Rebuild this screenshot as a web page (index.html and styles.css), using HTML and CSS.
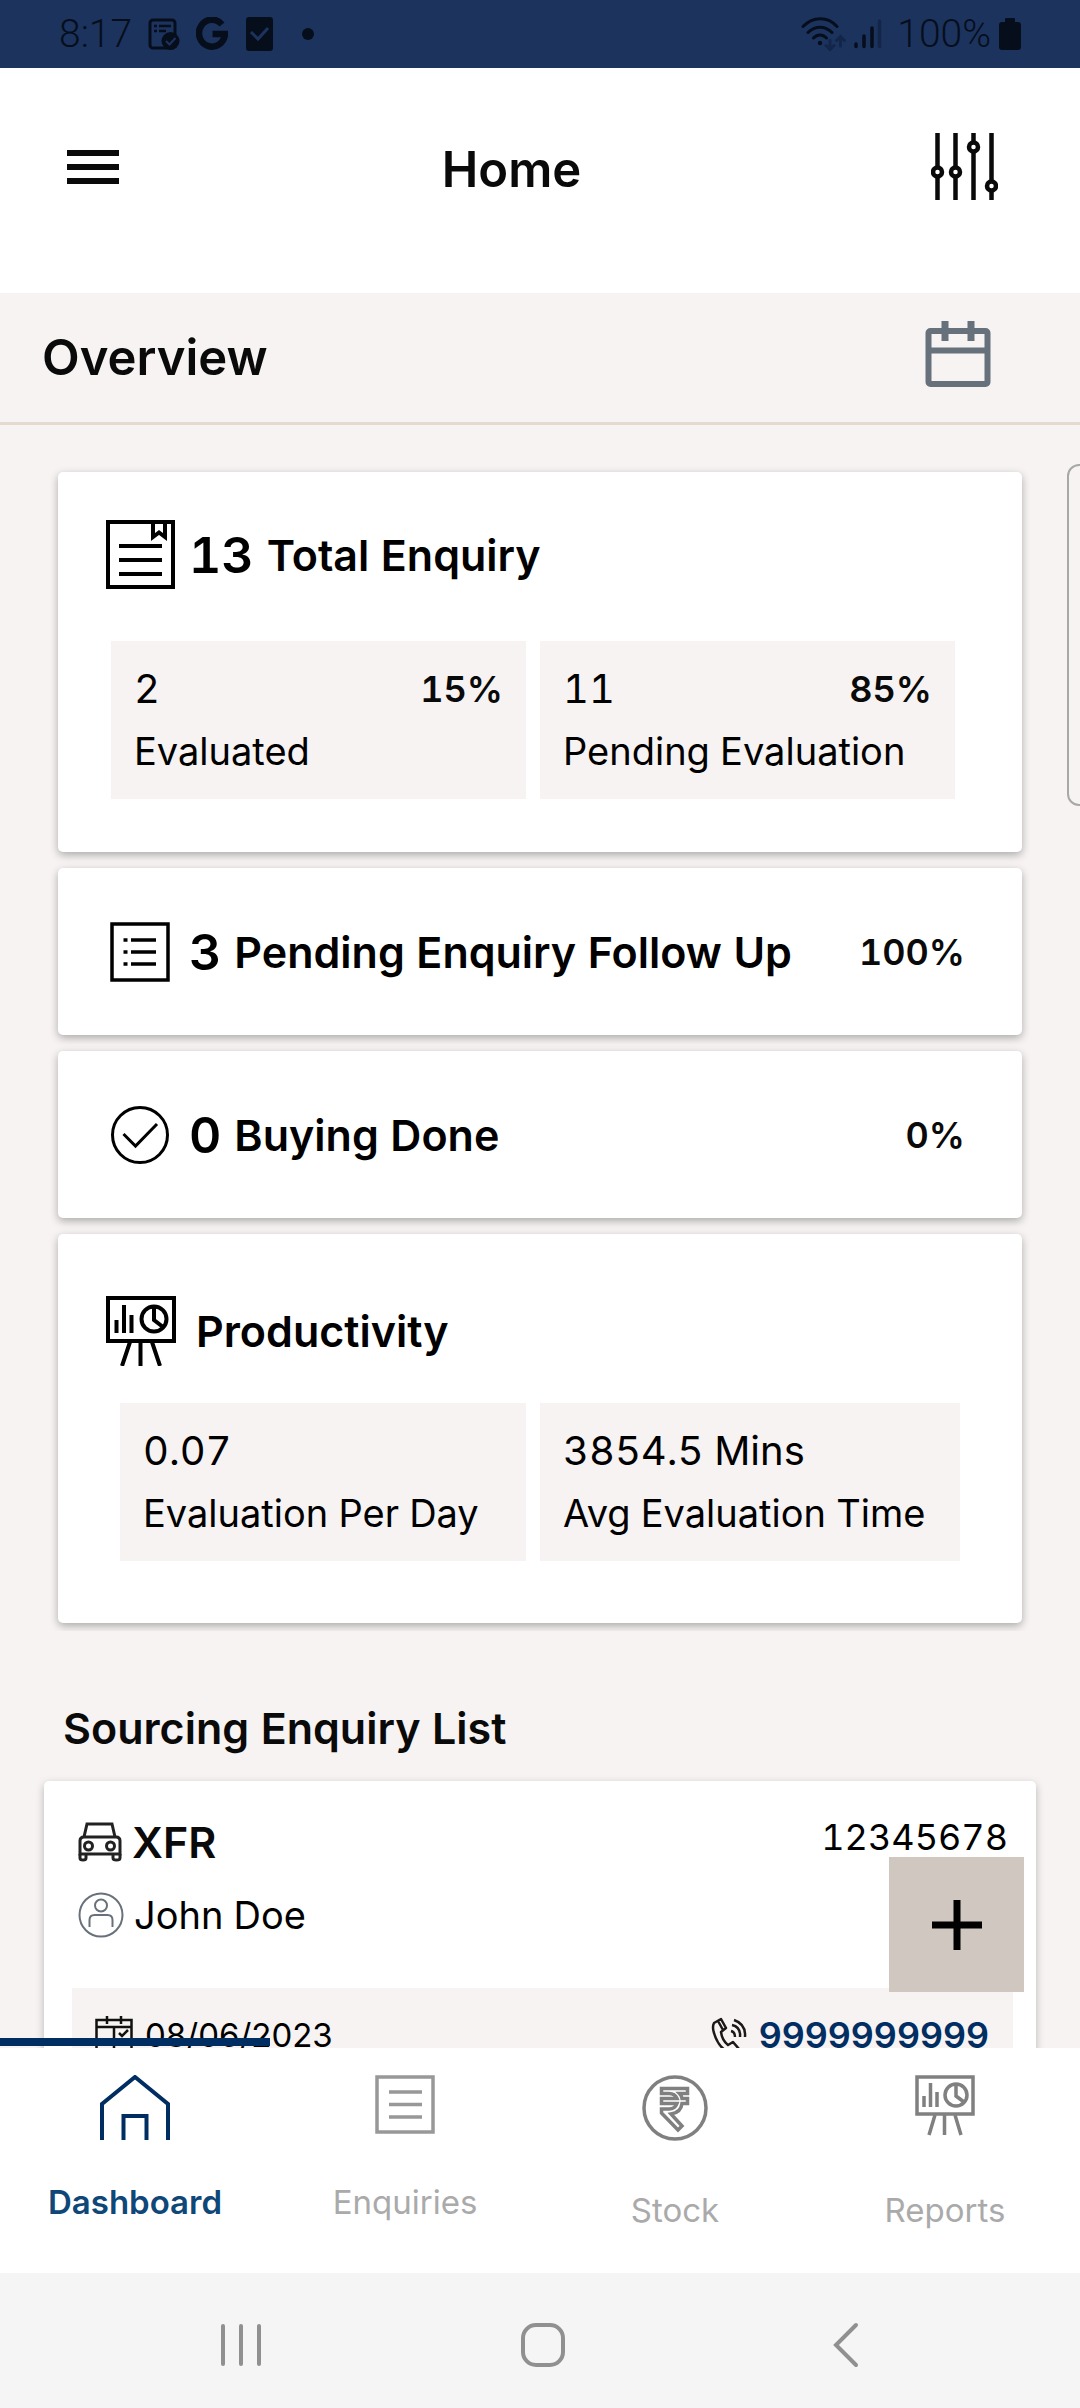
FILE: index.html
```html
<!DOCTYPE html>
<html lang="en">
<head>
    <meta charset="UTF-8">
    <meta name="viewport" content="width=device-width, initial-scale=1.0">
    <title>Home</title>
    <link rel="stylesheet" href="styles.css">
</head>
<body>
    <div class="status-bar">
        <div class="status-left">
            <span class="status-text">8:17</span>
            <svg width="32" height="32" viewBox="0 0 32 32" fill="none" stroke="#060e1c" stroke-width="3">
                <rect x="2" y="2" width="25" height="28" rx="3"/>
                <path d="M6 8h3M11 8h12M6 13h3M11 13h7" stroke-width="2.500"/>
                <circle cx="22.500" cy="23" r="9" fill="#060e1c" stroke="none"/>
                <path d="M18 23l3.500 3.500 6-6.500" stroke="#1c335e" stroke-width="2"/>
            </svg>
            <svg width="32" height="34" viewBox="0 0 32 34" fill="none" stroke="#060e1c" stroke-width="6.500">
                <path d="M26 7.500A13 13.500 0 1 0 29 17H16.500"/>
            </svg>
            <svg class="status-check" width="27" height="34" viewBox="0 0 27 34">
                <rect width="27" height="34" rx="3" fill="#060e1c"/>
                <path d="M5 15l7 7L22 11" fill="none" stroke="#1c335e" stroke-width="3"/>
            </svg>
            <span class="status-dot"></span>
        </div>
        <div class="status-right">
            <svg width="45" height="34" viewBox="0 0 45 34" fill="none" stroke="#060e1c" stroke-width="3" stroke-linecap="round">
                <path d="M2 9.500c10-10.500 25-10.500 34 0M7 15.500c7-7 17-7 24 0M12.500 21c4-4 9-4 13 0"/>
                <circle cx="19" cy="26" r="2.200" fill="#060e1c" stroke="none"/>
                <path d="M29 23v9M25 28.500l4 4 4-4M39.500 29v-9M35.500 23.500l4-4 4 4" stroke="#13264a"/>
            </svg>
            <svg class="status-signal" width="28" height="32" viewBox="0 0 28 32" stroke="#060e1c" stroke-width="3.500" stroke-linecap="round">
                <path d="M2 26v2.500M10 18v10.500M18 10v18.500"/>
                <path d="M25.500 3v25.500" stroke="#13264a"/>
            </svg>
            <span class="status-text">100%</span>
            <svg class="status-battery" width="22" height="32" viewBox="0 0 22 32" fill="#060e1c">
                <rect x="6" y="0" width="10" height="6" rx="1"/>
                <rect x="0" y="4" width="22" height="28" rx="3"/>
            </svg>
        </div>
    </div>

    <header class="header">
        <button class="icon-button" aria-label="Menu">
            <svg width="52" height="34" viewBox="0 0 52 34" fill="#0a0a0a">
                <path d="M0 0h52v6H0zM0 14h52v6H0zM0 28h52v6H0z"/>
            </svg>
        </button>
        <h1 class="header-title">Home</h1>
        <button class="icon-button filter-button" aria-label="Filter">
            <svg width="67" height="67" viewBox="0 0 67 67" fill="none" stroke="#0a0a0a" stroke-width="4.500">
                <path d="M6.500 0v35M6.500 44v23M24.500 0v35M24.500 44v23M42.500 0v10M42.500 18v49M60.500 0v48M60.500 57v10"/>
                <circle cx="6.500" cy="39" r="4.500"/>
                <circle cx="24.500" cy="39" r="4.500"/>
                <circle cx="42.500" cy="14" r="4.500"/>
                <circle cx="60.500" cy="53" r="4.500"/>
            </svg>
        </button>
    </header>

    <div class="overview">
        <h2 class="overview-title">Overview</h2>
        <button class="icon-button" aria-label="Select dates">
            <svg width="66" height="68" viewBox="0 0 66 68" fill="none" stroke="#67717b" stroke-width="6">
                <rect x="3.500" y="11" width="59" height="53" rx="2"/>
                <path d="M3 30.500h60"/>
                <path d="M20 1v20M46 1v20" stroke-width="7"/>
            </svg>
        </button>
    </div>

    <main class="content">
        <div class="side-handle"></div>

        <section class="cards">
            <div class="card card-total">
                <div class="card-head">
                    <svg class="card-icon" width="69" height="69" viewBox="0 0 69 69" fill="none" stroke="#000" stroke-width="4">
                        <rect x="2" y="2" width="65" height="65"/>
                        <path d="M47 2v15l6-4.500 6 4.500V2M13 26h43M13 40h43M13 54h43"/>
                    </svg>
                    <span class="card-count">13</span>
                    <span class="card-title">Total Enquiry</span>
                </div>
                <div class="tiles">
                    <div class="tile">
                        <div class="tile-row">
                            <span class="tile-value">2</span>
                            <span class="percent">15%</span>
                        </div>
                        <div class="tile-label">Evaluated</div>
                    </div>
                    <div class="tile">
                        <div class="tile-row">
                            <span class="tile-value">11</span>
                            <span class="percent">85%</span>
                        </div>
                        <div class="tile-label">Pending Evaluation</div>
                    </div>
                </div>
            </div>

            <div class="card card-row">
                <svg class="card-icon" width="69" height="60" viewBox="0 0 69 60" fill="none" stroke="#000" stroke-width="3.500">
                    <rect x="6" y="2" width="56" height="56"/>
                    <path d="M17.500 18h4M25 18h25M17.500 30h4M25 30h25M17.500 42h4M25 42h25"/>
                </svg>
                <span class="card-count">3</span>
                <span class="card-title">Pending Enquiry Follow Up</span>
                <span class="percent">100%</span>
            </div>

            <div class="card card-row">
                <svg class="card-icon" width="69" height="60" viewBox="0 0 69 60" fill="none" stroke="#000" stroke-width="3">
                    <circle cx="34" cy="30" r="27.500"/>
                    <path d="M17.500 29l12 12L51 19"/>
                </svg>
                <span class="card-count">0</span>
                <span class="card-title">Buying Done</span>
                <span class="percent">0%</span>
            </div>

            <div class="card card-productivity">
                <div class="card-head">
                    <svg class="card-icon" width="70" height="70" viewBox="0 0 70 70" fill="none" stroke="#000" stroke-width="4">
                        <rect x="2" y="2" width="66" height="43"/>
                        <path d="M10.500 37V24M18 37V9M25.500 37V19M24 46l-8 24M34.500 46v24M46 46l8 24"/>
                        <circle cx="48" cy="23" r="12.500"/>
                        <path d="M48 10v14l9 7"/>
                    </svg>
                    <span class="card-title">Productivity</span>
                </div>
                <div class="tiles">
                    <div class="tile">
                        <div class="tile-value">0.07</div>
                        <div class="tile-label">Evaluation Per Day</div>
                    </div>
                    <div class="tile">
                        <div class="tile-value">3854.5 Mins</div>
                        <div class="tile-label">Avg Evaluation Time</div>
                    </div>
                </div>
            </div>
        </section>

        <h2 class="list-title">Sourcing Enquiry List</h2>

        <article class="enquiry">
            <div class="enquiry-top">
                <svg class="enquiry-icon" width="44" height="40" viewBox="0 0 44 40" fill="none" stroke="#222" stroke-width="3">
                    <path d="M6 15L9 2h25l3 13"/>
                    <path d="M2 32V19q0-4 4-4h32q4 0 4 4v13z"/>
                    <circle cx="10.500" cy="24" r="4"/>
                    <circle cx="32.500" cy="24" r="4"/>
                    <path d="M2 32v4q0 2 3 2t3-2v-4M35 32v4q0 2 3.500 2t3.500-2v-4"/>
                </svg>
                <span class="enquiry-name">XFR</span>
                <span class="enquiry-id">12345678</span>
            </div>
            <div class="enquiry-person">
                <svg class="enquiry-icon" width="46" height="46" viewBox="0 0 46 46" fill="none" stroke="#67717b" stroke-width="2">
                    <circle cx="23" cy="23" r="21.500"/>
                    <circle cx="23" cy="13.500" r="6"/>
                    <path d="M11.500 35v-7q0-5 5-5h13q5 0 5 5v7"/>
                </svg>
                <span class="person-name">John Doe</span>
            </div>
            <div class="enquiry-meta">
                <div class="meta-item">
                    <svg width="38" height="38" viewBox="0 0 38 38" fill="none" stroke="#111" stroke-width="2.500">
                        <rect x="1.500" y="4" width="35" height="33"/>
                        <path d="M1 11h36M12 0v8M26 0v8M19 11v26M1 24h18M24 17l3 3 6-6"/>
                    </svg>
                    <span class="meta-date">08/06/2023</span>
                </div>
                <div class="meta-item">
                    <svg width="36" height="38" viewBox="0 0 36 38" fill="none" stroke="#1d1816" stroke-width="2.500" stroke-linejoin="round">
                        <path d="M3 7l7-4 5 9-5 4q1 8 7 13l5-3 6 7-6 5Q8 34 3 17 1 11 3 7zM7 5l5 9"/>
                        <path d="M20 15q4 1 4 6M21 9q9 2 8 12M23 4q12 4 11 17"/>
                    </svg>
                    <a class="meta-phone" href="tel:9999999999">9999999999</a>
                </div>
            </div>
        </article>

        <button class="add-button" aria-label="Add enquiry">
            <svg width="50" height="50" viewBox="0 0 50 50" stroke="#000" stroke-width="7">
                <path d="M25 0v50M0 25h50"/>
            </svg>
        </button>
    </main>

    <nav class="tabs">
        <a class="tab tab-active" href="#dashboard">
            <svg class="tab-icon" width="70" height="66" viewBox="0 0 70 66" fill="none" stroke="#002d62" stroke-width="4">
                <path d="M2 65V29L35 2l33 27v36M23.500 65V41h23v24"/>
            </svg>
            <span class="tab-label">Dashboard</span>
        </a>
        <a class="tab" href="#enquiries">
            <svg class="tab-icon" width="60" height="66" viewBox="0 0 60 66" fill="none" stroke="#989898" stroke-width="3.500">
                <rect x="2" y="2" width="56" height="55"/>
                <path d="M14 17h33M14 29.500h33M14 42h33"/>
            </svg>
            <span class="tab-label">Enquiries</span>
        </a>
        <a class="tab tab-low" href="#stock">
            <svg class="tab-icon" width="66" height="66" viewBox="0 0 66 66" fill="none" stroke="#808080" stroke-width="3.500">
                <circle cx="33" cy="33" r="31"/>
                <path d="M19.500 13.500h26v5h-8q2 2 2.500 5h5.500v5H40q-1 9-11 10.500l11 12-4 4-16.500-17v-4H27q6 0 8-5.500H19.500v-5H35q-2-5-8-5h-7.500z"/>
            </svg>
            <span class="tab-label">Stock</span>
        </a>
        <a class="tab tab-low" href="#reports">
            <svg class="tab-icon" width="60" height="66" viewBox="0 0 60 66" fill="none" stroke="#808080" stroke-width="3.500">
                <rect x="2" y="2" width="56" height="37"/>
                <path d="M9 32V21M15.500 32V8M22 32V17M20 40l-6 20M29.500 40v20M40 40l6 20"/>
                <circle cx="41" cy="20" r="11"/>
                <path d="M41 9v12l8 6"/>
            </svg>
            <span class="tab-label">Reports</span>
        </a>
    </nav>

    <div class="system-nav">
        <button class="icon-button" aria-label="Recent apps">
            <svg width="40" height="44" viewBox="0 0 40 44" stroke="#909090" stroke-width="4" stroke-linecap="round">
                <path d="M2 3v38M20 3v38M38 3v38"/>
            </svg>
        </button>
        <button class="icon-button" aria-label="Home screen">
            <svg width="44" height="44" viewBox="0 0 44 44" fill="none" stroke="#909090" stroke-width="4">
                <rect x="2" y="2" width="40" height="40" rx="13"/>
            </svg>
        </button>
        <button class="icon-button" aria-label="Back">
            <svg width="26" height="46" viewBox="0 0 26 46" fill="none" stroke="#909090" stroke-width="4" stroke-linecap="round">
                <path d="M23 3L3 23l20 20"/>
            </svg>
        </button>
    </div>
</body>
</html>
```
FILE: styles.css
```css
* {
    box-sizing: border-box;
}
body {
    margin: 0;
    height: 100vh;
    display: flex;
    flex-direction: column;
    overflow: hidden;
    font-family: Inter, "Liberation Sans", sans-serif;
    font-variant-numeric: tabular-nums;
    background-color: #f6f3f2;
    color: #000;
}
h1, h2 {
    margin: 0;
}
svg {
    display: block;
    flex: none;
}
.icon-button {
    padding: 0;
    border: none;
    background: none;
    cursor: pointer;
}

/* status bar */
.status-bar {
    display: flex;
    justify-content: space-between;
    align-items: center;
    height: 68px;
    padding: 0 59px 0 59px;
    background-color: #1c335e;
    color: #060e1c;
    flex: none;
}
.status-left,
.status-right {
    display: flex;
    align-items: center;
}
.status-left {
    gap: 16px;
}
.status-text {
    font-family: Roboto, sans-serif;
    font-size: 39px;
    font-weight: 300;
    line-height: 68px;
}
.status-check {
    margin-left: 2px;
}
.status-dot {
    width: 12px;
    height: 12px;
    margin-left: 13px;
    border-radius: 50%;
    background-color: #060e1c;
}
.status-signal {
    margin: 0 15px 0 8px;
}
.status-battery {
    margin-left: 8px;
}

/* header */
.header {
    display: flex;
    align-items: center;
    height: 225px;
    padding: 0 55px 28px 67px;
    background-color: #fff;
    flex: none;
}
.header-title {
    flex: 1;
    padding-top: 6px;
    font-size: 49px;
    font-weight: 600;
    text-align: center;
    color: #0a0a0a;
}
.filter-button {
    padding: 0 27px;
}
.overview {
    display: flex;
    justify-content: space-between;
    align-items: center;
    height: 132px;
    padding: 0 89px 0 42px;
    border-bottom: 3px solid #e4dad0;
    flex: none;
}
.overview .icon-button {
    padding-bottom: 8px;
}
.overview-title {
    font-size: 49px;
    font-weight: 600;
    color: #0a0a0a;
}

/* scrolling content */
.content {
    position: relative;
    flex: 1;
    min-height: 0;
    overflow: hidden;
}
.side-handle {
    position: absolute;
    top: 39px;
    right: -12px;
    width: 25px;
    height: 342px;
    border: 2px solid #a8a8a8;
    border-radius: 12px;
}
.cards {
    display: flex;
    flex-direction: column;
    gap: 16px;
    margin: 39px 50px 0;
    padding: 8px;
    overflow: hidden;
}
.card {
    background-color: #fff;
    border-radius: 5px;
    box-shadow: 0 3px 8px rgba(0, 0, 0, 0.3);
}
.card-total {
    padding: 48px 67px 53px 48px;
}
.card-productivity {
    padding: 62px 62px 62px 48px;
}
.card-head {
    display: flex;
    align-items: center;
}
.card-row {
    display: flex;
    align-items: center;
    min-height: 167px;
    padding: 0 57px 0 48px;
}
.card-row .percent {
    margin-left: auto;
}
.card-icon {
    margin-right: 14px;
}
.card-count {
    margin-right: 13px;
    font-size: 50px;
    font-weight: 600;
    line-height: 60px;
}
.card-title {
    font-size: 43px;
    font-weight: 600;
    line-height: 60px;
}
.card-productivity .card-title {
    margin-left: 6px;
}
.percent {
    font-size: 36px;
    font-weight: 600;
    color: #0a0a0a;
}
.tiles {
    display: grid;
    grid-template-columns: 1fr 1fr;
    gap: 14px;
    margin: 52px 0 0 5px;
}
.card-productivity .tiles {
    grid-template-columns: 406fr 420fr;
    margin: 37px 0 0 14px;
}
.tile {
    padding: 17px 23px;
    background-color: #f6f3f2;
    line-height: 62px;
    white-space: nowrap;
}
.tile-row {
    display: flex;
    justify-content: space-between;
}
.tile-value {
    font-size: 40px;
}
.tile-label {
    font-size: 38px;
}

/* enquiry list */
.list-title {
    margin: 67px 0 23px 63px;
    font-size: 43px;
    font-weight: 600;
    line-height: 60px;
    color: #0a0a0a;
}
.enquiry {
    margin: 0 44px;
    padding: 37px 23px 40px 28px;
    background-color: #fff;
    border-radius: 5px;
    box-shadow: 0 3px 8px rgba(0, 0, 0, 0.25);
}
.enquiry-top,
.enquiry-person {
    display: flex;
    align-items: center;
    padding-left: 6px;
}
.enquiry-top {
    height: 48px;
}
.enquiry-person {
    margin-top: 26px;
}
.enquiry-icon {
    margin-right: 10px;
}
.enquiry-name {
    font-size: 43px;
    font-weight: 600;
    color: #0a0a0a;
}
.enquiry-id {
    align-self: flex-start;
    margin-left: auto;
    padding-right: 5px;
    font-size: 36px;
    line-height: 38px;
}
.person-name {
    font-size: 38px;
    line-height: 46px;
}
.enquiry-meta {
    display: flex;
    justify-content: space-between;
    margin-top: 50px;
    padding: 17px 24px 17px 23px;
    background-color: #f6f3f2;
    line-height: 60px;
}
.meta-item {
    display: flex;
    align-items: center;
    gap: 12px;
}
.meta-date {
    font-size: 33px;
    font-variant-numeric: normal;
}
.meta-phone {
    font-size: 36px;
    font-weight: 600;
    font-variant-numeric: normal;
    color: #002d62;
    text-decoration: none;
}
.add-button {
    position: absolute;
    right: 56px;
    bottom: 56px;
    display: flex;
    align-items: center;
    justify-content: center;
    width: 135px;
    height: 135px;
    border: none;
    background-color: #cfc7c0;
    cursor: pointer;
}

/* bottom tabs */
.tabs {
    display: flex;
    height: 225px;
    background-color: #fff;
    flex: none;
}
.tab {
    position: relative;
    display: flex;
    flex: 1;
    flex-direction: column;
    align-items: center;
    gap: 41px;
    padding-top: 27px;
    font-size: 33px;
    line-height: 40px;
    color: #aaa;
    text-decoration: none;
}
.tab-low {
    gap: 49px;
}
.tab-active {
    font-weight: 600;
    color: #0f4778;
}
.tab-active::before {
    content: "";
    position: absolute;
    top: -10px;
    left: 0;
    right: 0;
    height: 8px;
    background-color: #002d62;
}

/* android navigation */
.system-nav {
    display: grid;
    grid-template-columns: 1fr 1fr 1fr;
    align-items: center;
    justify-items: center;
    height: 135px;
    padding: 8px 83px 0 90px;
    background-color: #f5f5f5;
    flex: none;
}
```
